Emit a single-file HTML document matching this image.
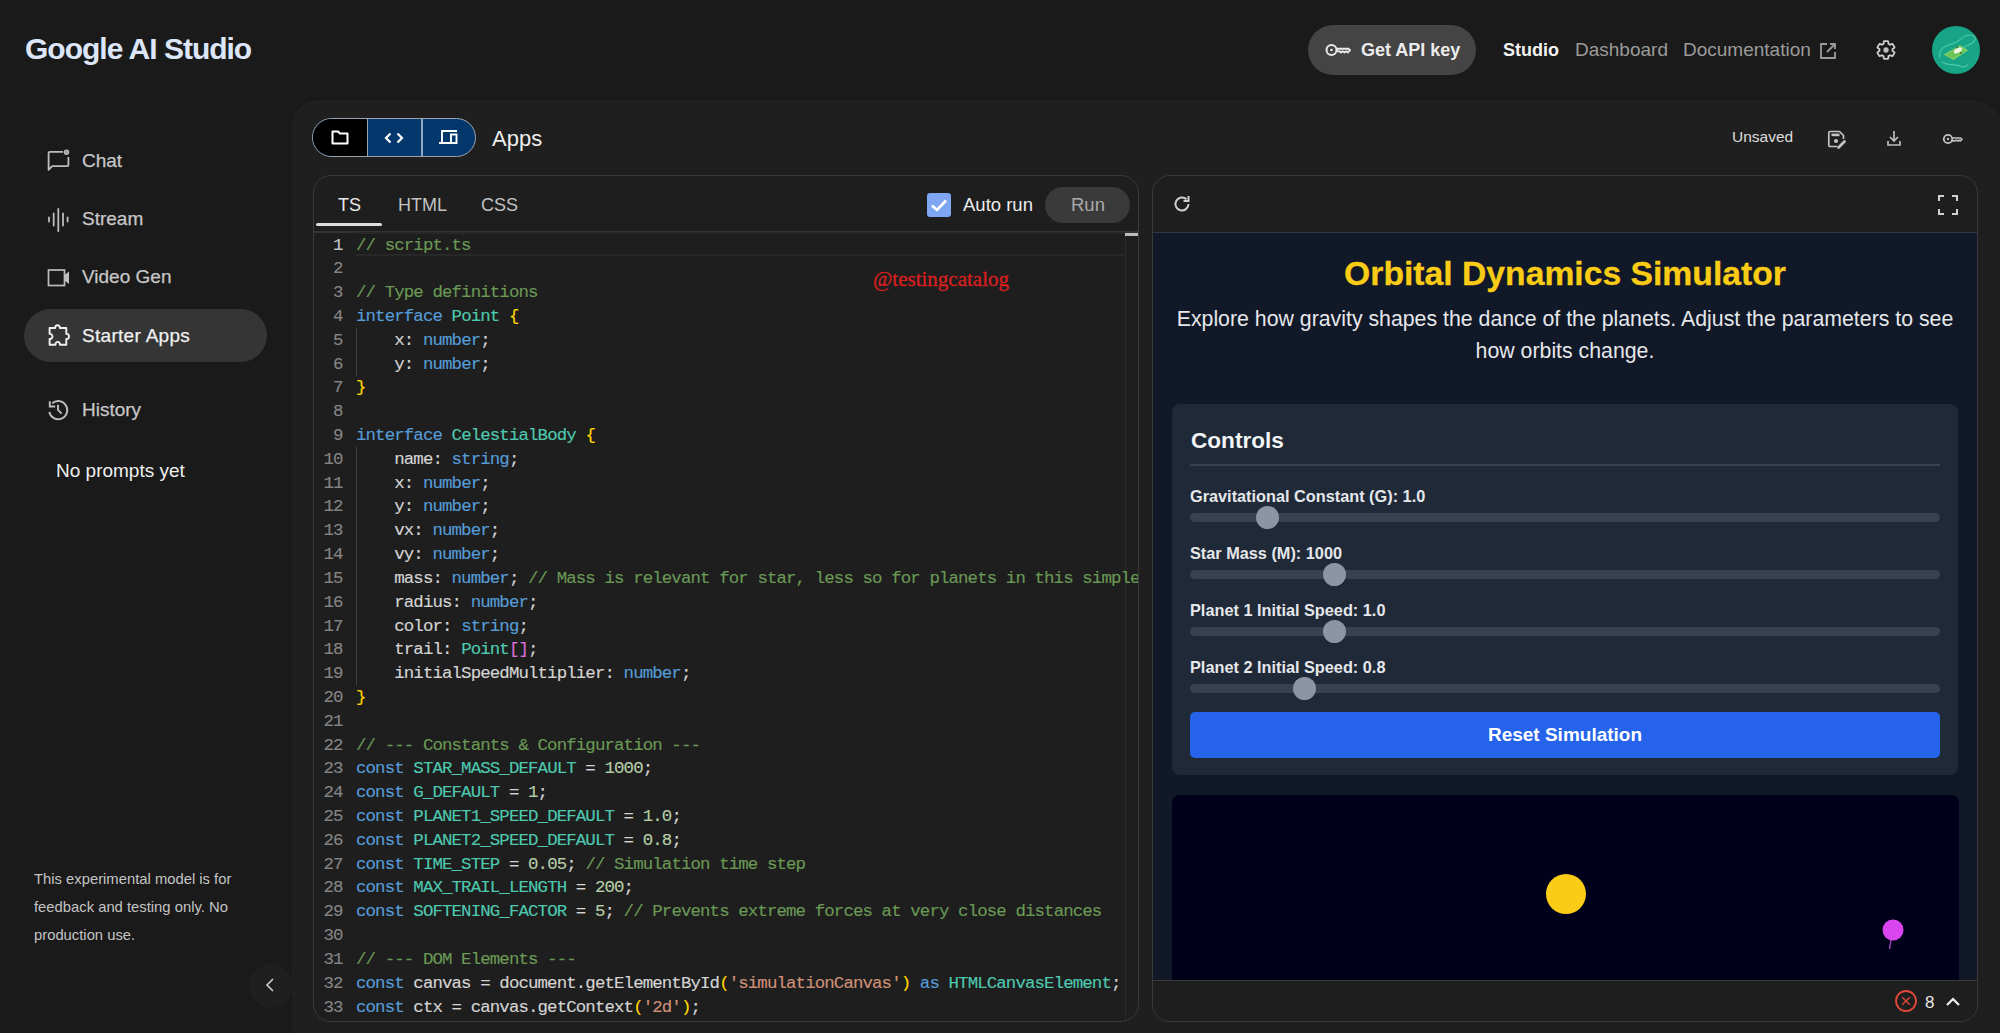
<!DOCTYPE html>
<html><head><meta charset="utf-8">
<style>
*{box-sizing:border-box;margin:0;padding:0}
html,body{width:2000px;height:1033px;overflow:hidden;background:#1a1a1a;font-family:"Liberation Sans",sans-serif;color:#e3e3e3}
.a{position:absolute}
svg{display:block}
.logo{left:25px;top:32px;font-size:30px;font-weight:bold;color:#dce6f8;letter-spacing:-1px;white-space:nowrap}
.apikey{left:1308px;top:25px;width:168px;height:50px;border-radius:25px;background:#444}
.navt{font-size:19px;white-space:nowrap;top:39px;line-height:22px}
.side{font-size:19px;color:#c7c7c7;white-space:nowrap;line-height:22px;-webkit-text-stroke:0.25px currentColor}
.ico{fill:none;stroke:#bdbdbd;stroke-width:1.7}
.main{left:291.5px;top:99.5px;width:1712px;height:1000px;border-radius:24px 30px 0 0;background:#1f1f1f;box-shadow:0 -1px 0 #161616}
.toggle{left:312px;top:118px;width:164px;height:39px;border:1.5px solid #9aa4ae;border-radius:20px;overflow:hidden;background:#04386c}
.panel{top:175px;width:826px;height:847px;border:1.5px solid #3a3a3a;border-radius:18px;background:#1e1e1e;overflow:hidden}
.mono{font-family:"Liberation Mono",monospace;font-size:17.4px;letter-spacing:-0.88px;line-height:23.8125px;white-space:pre;-webkit-text-stroke:0.15px currentColor}
.nums{left:312.5px;top:233.5px;width:30px;text-align:right;color:#858585}
.code{left:356px;top:233.5px;width:782px;height:787px;overflow:hidden;color:#d4d4d4}
.lbl{margin-top:1px;font-size:16.3px;font-weight:bold;color:#e5e7eb;white-space:nowrap;left:1190px}
.track{left:1190px;width:750px;height:9px;border-radius:5px;background:#374151}
.thumb{width:23px;height:23px;border-radius:50%;background:#8b95a3}
</style></head>
<body>
<div class="a logo">Google AI Studio</div>

<!-- top nav -->
<div class="a apikey"></div>
<svg class="a" style="left:1325px;top:40px" width="26" height="20" viewBox="0 0 26 20"><circle cx="6.5" cy="10" r="5" class="ico" style="stroke:#eaeaea;stroke-width:2"/><circle cx="6.5" cy="10" r="1.3" fill="#eaeaea"/><path d="M11.5 8.8H23.5L25 10.2L23 12.5L21.3 11.2L19.5 12.5L17.7 11.2L16 12.5L14.5 11.2H11.5" style="fill:none;stroke:#eaeaea;stroke-width:1.9;stroke-linejoin:round"/></svg>
<div class="a navt" style="left:1361px;color:#ececec;font-weight:bold;font-size:18px">Get API key</div>
<div class="a navt" style="left:1503px;color:#f2f2f2;font-weight:bold;font-size:18px">Studio</div>
<div class="a navt" style="left:1575px;color:#9b9b9b">Dashboard</div>
<div class="a navt" style="left:1683px;color:#9b9b9b">Documentation</div>
<svg class="a" style="left:1819px;top:42px" width="18" height="18" viewBox="0 0 18 18"><path d="M8 2H2V16H16V10M11 2H16V7M16 2L8 10" style="fill:none;stroke:#9b9b9b;stroke-width:1.8"/></svg>
<svg class="a" style="left:1875px;top:39px" width="22" height="22" viewBox="0 0 24 24"><path d="M19.14 12.94c.04-.3.06-.61.06-.94 0-.32-.02-.64-.07-.94l2.03-1.58a.49.49 0 0 0 .12-.61l-1.92-3.32a.488.488 0 0 0-.59-.22l-2.39.96c-.5-.38-1.03-.7-1.62-.94l-.36-2.54a.484.484 0 0 0-.48-.41h-3.84c-.24 0-.43.17-.47.41l-.36 2.54c-.59.24-1.13.57-1.62.94l-2.39-.96c-.22-.08-.47 0-.59.22L2.74 8.87c-.12.21-.08.47.12.61l2.03 1.58c-.05.3-.09.63-.09.94s.02.64.07.94l-2.03 1.58a.49.49 0 0 0-.12.61l1.92 3.32c.12.22.37.29.59.22l2.39-.96c.5.38 1.03.7 1.62.94l.36 2.54c.05.24.24.41.48.41h3.84c.24 0 .44-.17.47-.41l.36-2.54c.59-.24 1.13-.56 1.62-.94l2.39.96c.22.08.47 0 .59-.22l1.92-3.32c.12-.22.07-.47-.12-.61l-2.01-1.58z" style="fill:none;stroke:#cfcfcf;stroke-width:2"/><circle cx="12" cy="12" r="2.9" fill="#bfbfbf"/></svg>
<svg class="a" style="left:1932px;top:26px" width="48" height="48" viewBox="0 0 48 48"><circle cx="24" cy="24" r="24" fill="#17a487"/><path d="M8 32C6 24 12 20 20 18C28 16 30 9 38 9C44 9 45 14 40 17C34 21 28 22 22 26" style="fill:none;stroke:#4fcaa8;stroke-width:1.1"/><path d="M10 36C16 40 24 38 28 40C32 42 34 41 36 38" style="fill:none;stroke:#4fcaa8;stroke-width:1.1"/><path d="M11.7 28.5L28 19.3L36.1 24.2L21.5 34Z" fill="#86d26a"/><path d="M13.5 28.8L27.8 20.8L34 24.4L21.7 32.4Z" fill="#6cc456"/><ellipse cx="26" cy="24.5" rx="4.5" ry="2.2" transform="rotate(-28 26 24.5)" fill="#eef6e4"/><circle cx="25" cy="21" r="1" fill="#2e6b3a"/><circle cx="29" cy="27" r="1" fill="#2e6b3a"/></svg>

<!-- sidebar -->
<svg class="a" style="left:46px;top:148px" width="26" height="24" viewBox="0 0 26 24"><path d="M17 3.8H3.8Q2.6 3.8 2.6 5V21.8L6.2 18.2H21.2Q22.4 18.2 22.4 17V9" style="fill:none;stroke:#bdbdbd;stroke-width:1.8;stroke-linejoin:round"/><circle cx="20.5" cy="4.2" r="2.1" style="fill:#9a9a9a;stroke:#bdbdbd;stroke-width:1.3"/></svg>
<div class="a side" style="left:82px;top:150px">Chat</div>
<svg class="a" style="left:46px;top:207px" width="26" height="26" viewBox="0 0 26 26"><path d="M3 10.5V14.5M7.7 6.5V18.5M12.3 2V24M17 6.5V18.5M21.6 10.5V14.5" style="fill:none;stroke:#bdbdbd;stroke-width:1.8;stroke-linecap:round"/></svg>
<div class="a side" style="left:82px;top:208px">Stream</div>
<svg class="a" style="left:46px;top:267px" width="26" height="22" viewBox="0 0 26 22"><rect x="2.5" y="3" width="16" height="15.5" class="ico"/><path d="M18.5 8L23 4.5V17L18.5 13.5Z" fill="#bdbdbd"/></svg>
<div class="a side" style="left:82px;top:266px">Video Gen</div>
<div class="a" style="left:24px;top:309px;width:243px;height:53px;border-radius:27px;background:#353535"></div>
<svg class="a" style="left:46px;top:323px" width="26" height="26" viewBox="0 0 26 26"><path d="M3.6 5H9.2C8.6 1.4 14.4 1.4 13.8 5H20.3V10.9C23.9 10.3 23.9 16.5 20.3 15.9V21.8H13.9C14.4 17.9 9 17.9 9.5 21.8H3.6V15.9C7.4 16.4 7.4 10.4 3.6 10.9Z" style="fill:none;stroke:#f0f0f0;stroke-width:1.9;stroke-linejoin:round"/></svg>
<div class="a side" style="left:82px;top:325px;color:#f0f0f0;letter-spacing:0.3px">Starter Apps</div>
<svg class="a" style="left:46px;top:398px" width="24" height="24" viewBox="0 0 24 24"><path d="M3.3 14A9.1 9.1 0 1 0 6.2 5.3" style="fill:none;stroke:#bdbdbd;stroke-width:1.9"/><path d="M3.8 3.2V8.6H9.2" style="fill:none;stroke:#bdbdbd;stroke-width:2"/><path d="M12 6.8V11.8L15.6 15.6" style="fill:none;stroke:#bdbdbd;stroke-width:1.9"/></svg>
<div class="a side" style="left:82px;top:399px">History</div>
<div class="a side" style="left:56px;top:460px;color:#f0f0f0;font-size:19px;-webkit-text-stroke:0">No prompts yet</div>
<div class="a" style="left:34px;top:865px;font-size:14.8px;line-height:28px;color:#c4c4c4;width:250px">This experimental model is for<br>feedback and testing only. No<br>production use.</div>
<div class="a" style="left:249px;top:964px;width:44px;height:44px;border-radius:22px;background:#1f1f1f"></div>
<svg class="a" style="left:262px;top:977px" width="16" height="16" viewBox="0 0 16 16"><path d="M11 2L5 8L11 14" style="fill:none;stroke:#cfcfcf;stroke-width:1.6"/></svg>

<!-- main -->
<div class="a main"></div>
<div class="a toggle">
  <div class="a" style="left:0;top:0;width:54px;height:100%;background:#000"></div>
  <div class="a" style="left:53.5px;top:0;width:1.5px;height:100%;background:#9aa4ae"></div>
  <div class="a" style="left:108px;top:0;width:1.5px;height:100%;background:#8fa8c0"></div>
</div>
<svg class="a" style="left:330px;top:128px" width="20" height="18" viewBox="0 0 20 18"><path d="M2.5 3.5H8L10 5.5H17.5V15.5H2.5Z" style="fill:none;stroke:#fff;stroke-width:2;stroke-linejoin:round"/></svg>
<svg class="a" style="left:383px;top:130px" width="22" height="16" viewBox="0 0 22 16"><path d="M7.5 3.5L3 8L7.5 12.5M14.5 3.5L19 8L14.5 12.5" style="fill:none;stroke:#fff;stroke-width:2.2"/></svg>
<svg class="a" style="left:438px;top:128px" width="22" height="18" viewBox="0 0 22 18"><path d="M4 14V3H19" style="fill:none;stroke:#fff;stroke-width:1.9"/><path d="M1 15H12" style="stroke:#fff;stroke-width:2"/><rect x="13" y="6.5" width="5.5" height="8.5" style="fill:none;stroke:#fff;stroke-width:1.9"/></svg>
<div class="a" style="left:492px;top:125.5px;font-size:22px;color:#ededed;line-height:26px">Apps</div>
<div class="a" style="left:1732px;top:128px;font-size:15.5px;color:#dedede;line-height:18px">Unsaved</div>
<svg class="a" style="left:1826px;top:129px" width="22" height="22" viewBox="0 0 22 22"><path d="M11 17.5H4.2Q2.8 17.5 2.8 16.1V3.9Q2.8 2.5 4.2 2.5H13.5L17.5 6.5V10" style="fill:none;stroke:#c4c4c4;stroke-width:1.7;stroke-linejoin:round"/><rect x="5.5" y="4.6" width="8" height="2.6" fill="#c4c4c4"/><circle cx="10" cy="12" r="2.1" fill="#c4c4c4"/><path d="M12.5 18.5L18.5 12.5" style="stroke:#c4c4c4;stroke-width:2.8;stroke-linecap:round"/></svg>
<svg class="a" style="left:1885px;top:129px" width="18" height="18" viewBox="0 0 18 18"><path d="M9 2V12M5 8L9 12L13 8M3 12V16H15V12" style="fill:none;stroke:#bdbdbd;stroke-width:1.7"/></svg>
<svg class="a" style="left:1942px;top:133px" width="22" height="12" viewBox="0 0 22 12"><circle cx="6" cy="6" r="4.2" style="fill:none;stroke:#c4c4c4;stroke-width:1.8"/><circle cx="6" cy="6" r="1.2" fill="#c4c4c4"/><path d="M10.2 5H18.5L20 6.2L18.3 8L17 7.2L15.6 8L14.2 7.2L12.8 7.9H10.2" style="fill:none;stroke:#c4c4c4;stroke-width:1.6;stroke-linejoin:round"/></svg>

<!-- code panel -->
<div class="a panel" style="left:312.5px"></div>
<div class="a" style="left:338px;top:195px;font-size:18px;color:#e8e8e8;line-height:21px">TS</div>
<div class="a" style="left:398px;top:195px;font-size:18px;color:#c2c2c2;line-height:21px">HTML</div>
<div class="a" style="left:481px;top:195px;font-size:18px;color:#c2c2c2;line-height:21px">CSS</div>
<div class="a" style="left:316px;top:223px;width:66px;height:3px;background:#dcdcdc;border-radius:2px"></div>
<div class="a" style="left:314px;top:231px;width:824px;height:1.5px;background:#333"></div>
<div class="a" style="left:927px;top:193px;width:24px;height:24px;border-radius:3px;background:#7ea6f2"></div>
<svg class="a" style="left:927px;top:193px" width="24" height="24" viewBox="0 0 24 24"><path d="M5 12.5L10 17L19 7.5" style="fill:none;stroke:#fff;stroke-width:2.6"/></svg>
<div class="a" style="left:963px;top:194px;font-size:18.5px;color:#ececec;line-height:21px">Auto run</div>
<div class="a" style="left:1045px;top:187px;width:85px;height:36px;border-radius:18px;background:#3a3a3a"></div>
<div class="a" style="left:1071px;top:194px;font-size:18.5px;color:#a9a9a9;line-height:21px">Run</div>
<div class="a" style="left:356px;top:232px;width:769px;height:24px;border:2px solid #282828;border-left:none;border-right:none"></div>
<div class="a" style="left:356px;top:328px;width:1px;height:48px;background:#404040"></div>
<div class="a" style="left:356px;top:447px;width:1px;height:238px;background:#404040"></div>
<div class="a" style="left:1125px;top:232px;width:1px;height:789px;background:#2c2c2c"></div>
<div class="a" style="left:1125px;top:233px;width:13px;height:3px;background:#bbb"></div>
<div class="a mono nums"><div style="color:#c6c6c6">1</div><div>2</div><div>3</div><div>4</div><div>5</div><div>6</div><div>7</div><div>8</div><div>9</div><div>10</div><div>11</div><div>12</div><div>13</div><div>14</div><div>15</div><div>16</div><div>17</div><div>18</div><div>19</div><div>20</div><div>21</div><div>22</div><div>23</div><div>24</div><div>25</div><div>26</div><div>27</div><div>28</div><div>29</div><div>30</div><div>31</div><div>32</div><div>33</div></div>
<div class="a mono code"><div><span style="color:#6a9955">// script.ts</span></div><div>&nbsp;</div><div><span style="color:#6a9955">// Type definitions</span></div><div><span style="color:#569cd6">interface</span> <span style="color:#4ec9b0">Point</span> <span style="color:#ffd700">{</span></div><div>    x: <span style="color:#569cd6">number</span>;</div><div>    y: <span style="color:#569cd6">number</span>;</div><div><span style="color:#ffd700">}</span></div><div>&nbsp;</div><div><span style="color:#569cd6">interface</span> <span style="color:#4ec9b0">CelestialBody</span> <span style="color:#ffd700">{</span></div><div>    name: <span style="color:#569cd6">string</span>;</div><div>    x: <span style="color:#569cd6">number</span>;</div><div>    y: <span style="color:#569cd6">number</span>;</div><div>    vx: <span style="color:#569cd6">number</span>;</div><div>    vy: <span style="color:#569cd6">number</span>;</div><div>    mass: <span style="color:#569cd6">number</span>; <span style="color:#6a9955">// Mass is relevant for star, less so for planets in this simple simulation</span></div><div>    radius: <span style="color:#569cd6">number</span>;</div><div>    color: <span style="color:#569cd6">string</span>;</div><div>    trail: <span style="color:#4ec9b0">Point</span><span style="color:#da70d6">[]</span>;</div><div>    initialSpeedMultiplier: <span style="color:#569cd6">number</span>;</div><div><span style="color:#ffd700">}</span></div><div>&nbsp;</div><div><span style="color:#6a9955">// --- Constants &amp; Configuration ---</span></div><div><span style="color:#569cd6">const</span> <span style="color:#4ec9b0">STAR_MASS_DEFAULT</span> = <span style="color:#b5cea8">1000</span>;</div><div><span style="color:#569cd6">const</span> <span style="color:#4ec9b0">G_DEFAULT</span> = <span style="color:#b5cea8">1</span>;</div><div><span style="color:#569cd6">const</span> <span style="color:#4ec9b0">PLANET1_SPEED_DEFAULT</span> = <span style="color:#b5cea8">1.0</span>;</div><div><span style="color:#569cd6">const</span> <span style="color:#4ec9b0">PLANET2_SPEED_DEFAULT</span> = <span style="color:#b5cea8">0.8</span>;</div><div><span style="color:#569cd6">const</span> <span style="color:#4ec9b0">TIME_STEP</span> = <span style="color:#b5cea8">0.05</span>; <span style="color:#6a9955">// Simulation time step</span></div><div><span style="color:#569cd6">const</span> <span style="color:#4ec9b0">MAX_TRAIL_LENGTH</span> = <span style="color:#b5cea8">200</span>;</div><div><span style="color:#569cd6">const</span> <span style="color:#4ec9b0">SOFTENING_FACTOR</span> = <span style="color:#b5cea8">5</span>; <span style="color:#6a9955">// Prevents extreme forces at very close distances</span></div><div>&nbsp;</div><div><span style="color:#6a9955">// --- DOM Elements ---</span></div><div><span style="color:#569cd6">const</span> canvas = document.getElementById<span style="color:#ffd700">(</span><span style="color:#ce9178">'simulationCanvas'</span><span style="color:#ffd700">)</span> <span style="color:#569cd6">as</span> <span style="color:#4ec9b0">HTMLCanvasElement</span>;</div><div><span style="color:#569cd6">const</span> ctx = canvas.getContext<span style="color:#ffd700">(</span><span style="color:#ce9178">'2d'</span><span style="color:#ffd700">)</span>;</div></div>
<div class="a" style="left:873px;top:267px;font-family:'Liberation Serif',serif;font-size:21px;color:#dc1e1e;-webkit-text-stroke:0.3px #dc1e1e;white-space:nowrap">@testingcatalog</div>

<!-- preview panel -->
<div class="a panel" style="left:1152px;overflow:hidden">
  <div class="a" style="left:0;top:56px;width:100%;height:1.5px;background:#30363e"></div>
  <div class="a" style="left:0;top:57px;width:100%;height:748px;background:#111827"></div>
  <div class="a" style="left:19px;top:619px;width:787px;height:200px;border-radius:8px;background:#00001a"></div>
  <div class="a" style="left:0;top:804px;width:100%;height:50px;background:#1e1e1e;border-top:1.5px solid #3a3a3a"></div>
</div>
<svg class="a" style="left:1171px;top:193px" width="22" height="22" viewBox="0 0 22 22"><path d="M17.5 11A6.5 6.5 0 1 1 15.5 6.3" style="fill:none;stroke:#cfcfcf;stroke-width:2"/><path d="M17.5 3V8H12.5" style="fill:none;stroke:#cfcfcf;stroke-width:2"/></svg>
<svg class="a" style="left:1937px;top:194px" width="22" height="22" viewBox="0 0 22 22"><path d="M2 7V2H7M15 2H20V7M20 15V20H15M7 20H2V15" style="fill:none;stroke:#d0d0d0;stroke-width:2"/></svg>

<div class="a" style="left:1153px;top:253px;width:824px;text-align:center;font-size:33.7px;font-weight:bold;color:#facc15;line-height:40px;-webkit-text-stroke:0.3px #facc15">Orbital Dynamics Simulator</div>
<div class="a" style="left:1153px;top:303px;width:824px;text-align:center;font-size:21.3px;color:#e5e7eb;line-height:32px">Explore how gravity shapes the dance of the planets. Adjust the parameters to see<br>how orbits change.</div>

<div class="a" style="left:1172px;top:404px;width:786px;height:371px;border-radius:8px;background:#1f2937"></div>
<div class="a" style="left:1191px;top:427px;font-size:22.6px;font-weight:bold;color:#f3f4f6;line-height:28px">Controls</div>
<div class="a" style="left:1190px;top:464px;width:750px;height:1.5px;background:#374151"></div>
<div class="a lbl" style="top:486px">Gravitational Constant (G): 1.0</div>
<div class="a track" style="top:513px"></div>
<div class="a thumb" style="left:1256px;top:506px"></div>
<div class="a lbl" style="top:543px">Star Mass (M): 1000</div>
<div class="a track" style="top:570px"></div>
<div class="a thumb" style="left:1323px;top:563px"></div>
<div class="a lbl" style="top:600px">Planet 1 Initial Speed: 1.0</div>
<div class="a track" style="top:627px"></div>
<div class="a thumb" style="left:1323px;top:620px"></div>
<div class="a lbl" style="top:657px">Planet 2 Initial Speed: 0.8</div>
<div class="a track" style="top:684px"></div>
<div class="a thumb" style="left:1293px;top:677px"></div>
<div class="a" style="left:1190px;top:712px;width:750px;height:46px;border-radius:5px;background:#2563eb;text-align:center;font-size:19px;font-weight:bold;color:#fff;line-height:46px">Reset Simulation</div>

<div class="a" style="left:1545.5px;top:874px;width:40px;height:40px;border-radius:50%;background:#facc15"></div>
<svg class="a" style="left:1875px;top:912px" width="36" height="42" viewBox="0 0 36 42"><path d="M17 22L14.5 37" style="stroke:#a040b8;stroke-width:1.5"/><circle cx="18" cy="18" r="10.5" fill="#d946ef"/></svg>

<svg class="a" style="left:1894px;top:989px" width="24" height="24" viewBox="0 0 24 24"><circle cx="12" cy="12" r="10" style="fill:none;stroke:#e2483a;stroke-width:1.8"/><path d="M8.2 8.2L15.8 15.8M15.8 8.2L8.2 15.8" style="stroke:#e2483a;stroke-width:1.4"/></svg>
<div class="a" style="left:1925px;top:991.5px;font-size:17px;color:#e8e8e8;line-height:21px">8</div>
<svg class="a" style="left:1945px;top:994.5px" width="16" height="14" viewBox="0 0 16 14"><path d="M2 10L8 4L14 10" style="fill:none;stroke:#f0f0f0;stroke-width:2.2"/></svg>
</body></html>
